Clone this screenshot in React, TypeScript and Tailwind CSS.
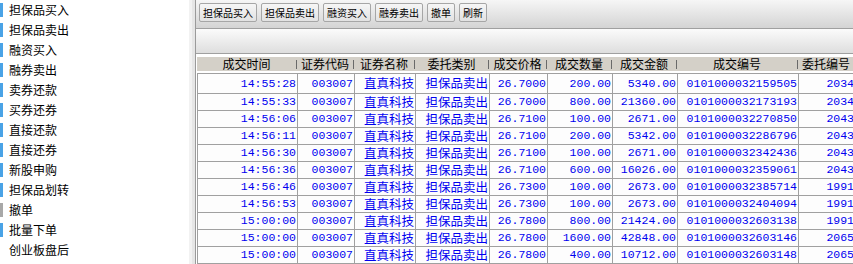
import React from "react";

const menu = [
  { label: "担保品买入", bar: "bg-[#4aa3e6]" },
  { label: "担保品卖出", bar: "bg-[#4aa3e6]" },
  { label: "融资买入", bar: "bg-[#4aa3e6]" },
  { label: "融券卖出", bar: "bg-[#4aa3e6]" },
  { label: "卖券还款", bar: "bg-[#4aa3e6]" },
  { label: "买券还券", bar: "bg-[#4aa3e6]" },
  { label: "直接还款", bar: "bg-[#4aa3e6]" },
  { label: "直接还券", bar: "bg-[#4aa3e6]" },
  { label: "新股申购", bar: "bg-[#4aa3e6]" },
  { label: "担保品划转", bar: "bg-[#4aa3e6]" },
  { label: "撤单", bar: "bg-[#a8a8a8]" },
  { label: "批量下单", bar: "bg-[#4aa3e6]" },
  { label: "创业板盘后", bar: "bg-transparent" },
];

const buttons = ["担保品买入", "担保品卖出", "融资买入", "融券卖出", "撤单", "刷新"];

const columns = [
  { title: "成交时间", w: "w-[100px]", cjk: false },
  { title: "证券代码", w: "w-[57px]", cjk: false },
  { title: "证券名称", w: "w-[61px]", cjk: true },
  { title: "委托类别", w: "w-[74px]", cjk: true },
  { title: "成交价格", w: "w-[58px]", cjk: false },
  { title: "成交数量", w: "w-[65px]", cjk: false },
  { title: "成交金额", w: "w-[65px]", cjk: false },
  { title: "成交编号", w: "w-[121px]", cjk: false },
  { title: "委托编号", w: "w-[57px]", cjk: false },
];

const rows = [
  ["14:55:28", "26.7000", "200.00", "5340.00", "0101000032159505", "2034"],
  ["14:55:33", "26.7000", "800.00", "21360.00", "0101000032173193", "2034"],
  ["14:56:06", "26.7100", "100.00", "2671.00", "0101000032270850", "2043"],
  ["14:56:11", "26.7100", "200.00", "5342.00", "0101000032286796", "2043"],
  ["14:56:30", "26.7100", "100.00", "2671.00", "0101000032342436", "2043"],
  ["14:56:36", "26.7100", "600.00", "16026.00", "0101000032359061", "2043"],
  ["14:56:46", "26.7300", "100.00", "2673.00", "0101000032385714", "1991"],
  ["14:56:53", "26.7300", "100.00", "2673.00", "0101000032404094", "1991"],
  ["15:00:00", "26.7800", "800.00", "21424.00", "0101000032603138", "1991"],
  ["15:00:00", "26.7800", "1600.00", "42848.00", "0101000032603146", "2065"],
  ["15:00:00", "26.7800", "400.00", "10712.00", "0101000032603148", "2065"],
];

const cjkFont = "font-['Noto_Sans_CJK_SC',sans-serif]";
const monoFont = "font-['Liberation_Mono',monospace]";

const App = () => {
  return (
    <div className={`flex w-[853px] h-[264px] overflow-hidden bg-white ${cjkFont}`}>
      {/* Left menu */}
      <div className="w-[189px] shrink-0 flex flex-col bg-white">
        {menu.map((item) => (
          <div key={item.label} className="h-[20px] flex items-center shrink-0">
            <span className={`w-[3px] h-[14px] ${item.bar}`} />
            <span className="ml-[6px] text-[12px] leading-none text-black">
              {item.label}
            </span>
          </div>
        ))}
      </div>

      {/* Splitter */}
      <div className="w-[7px] shrink-0 flex">
        <div className="w-[3px] bg-[#f2f2f2]" />
        <div className="w-[3px] bg-[#e6e6e6]" />
        <div className="w-px bg-[#9a9a9a]" />
      </div>

      {/* Main */}
      <div className="flex-1 flex flex-col overflow-hidden">
        {/* Toolbar */}
        <div className="h-[29px] shrink-0 flex items-center gap-[4px] pl-[3px] pb-[4px] pt-[1px] bg-gradient-to-b from-[#f6f6f6] to-[#d4d4d4] border-b border-[#a0a0a0]">
          {buttons.map((b) => (
            <div
              key={b}
              className="h-[19px] px-[3px] flex items-center border border-[#a6a6a6] rounded-[2px] bg-gradient-to-b from-[#f6f6f6] to-[#e2e2e2] text-[10px] leading-none text-black whitespace-nowrap"
            >
              {b}
            </div>
          ))}
        </div>

        {/* Empty band */}
        <div className="h-[25px] shrink-0 bg-gradient-to-b from-[#fbfbfb] to-[#dedede] border-b border-[#a0a0a0]" />

        {/* Table */}
        <div className="flex-1 flex flex-col pl-px bg-white pt-[3px]">
          <div className="h-[14px] flex bg-[#d4d0c8] text-black text-[12px] leading-none shrink-0">
            {columns.map((c) => (
              <div key={c.title} className={`${c.w} shrink-0 flex items-center`}>
                <span className="flex-1 text-center whitespace-nowrap">{c.title}</span>
                <span className="w-px h-[9px] bg-[#6a6a6a]" />
              </div>
            ))}
            <div className="flex-1" />
          </div>
          <div className="h-[2px] shrink-0" />
          <div className="flex-1 border-t border-l border-[#a0a0a0] flex flex-col">
            {rows.map((r, i) => {
              const cells = [r[0], "003007", "直真科技", "担保品卖出", r[1], r[2], r[3], r[4], r[5]];
              return (
                <div
                  key={i}
                  className={`flex shrink-0 border-b border-[#a0a0a0] bg-[#fdfdfd] ${
                    i === 0 ? "h-[20px]" : "h-[17px]"
                  }`}
                >
                  {cells.map((v, j) => (
                    <div
                      key={j}
                      className={`${columns[j].w} shrink-0 flex items-center justify-end pr-px border-r border-[#a0a0a0] text-[#0000f0] whitespace-nowrap leading-none ${
                        columns[j].cjk ? `${cjkFont} text-[12.5px]` : `${monoFont} text-[11.5px]`
                      }`}
                    >
                      {v}
                    </div>
                  ))}
                </div>
              );
            })}
            <div className="flex-1 flex">
              {columns.map((c) => (
                <div key={c.title} className={`${c.w} shrink-0 border-r border-[#a0a0a0] bg-[#fdfdfd]`} />
              ))}
            </div>
          </div>
        </div>
      </div>
    </div>
  );
};

export default App;
